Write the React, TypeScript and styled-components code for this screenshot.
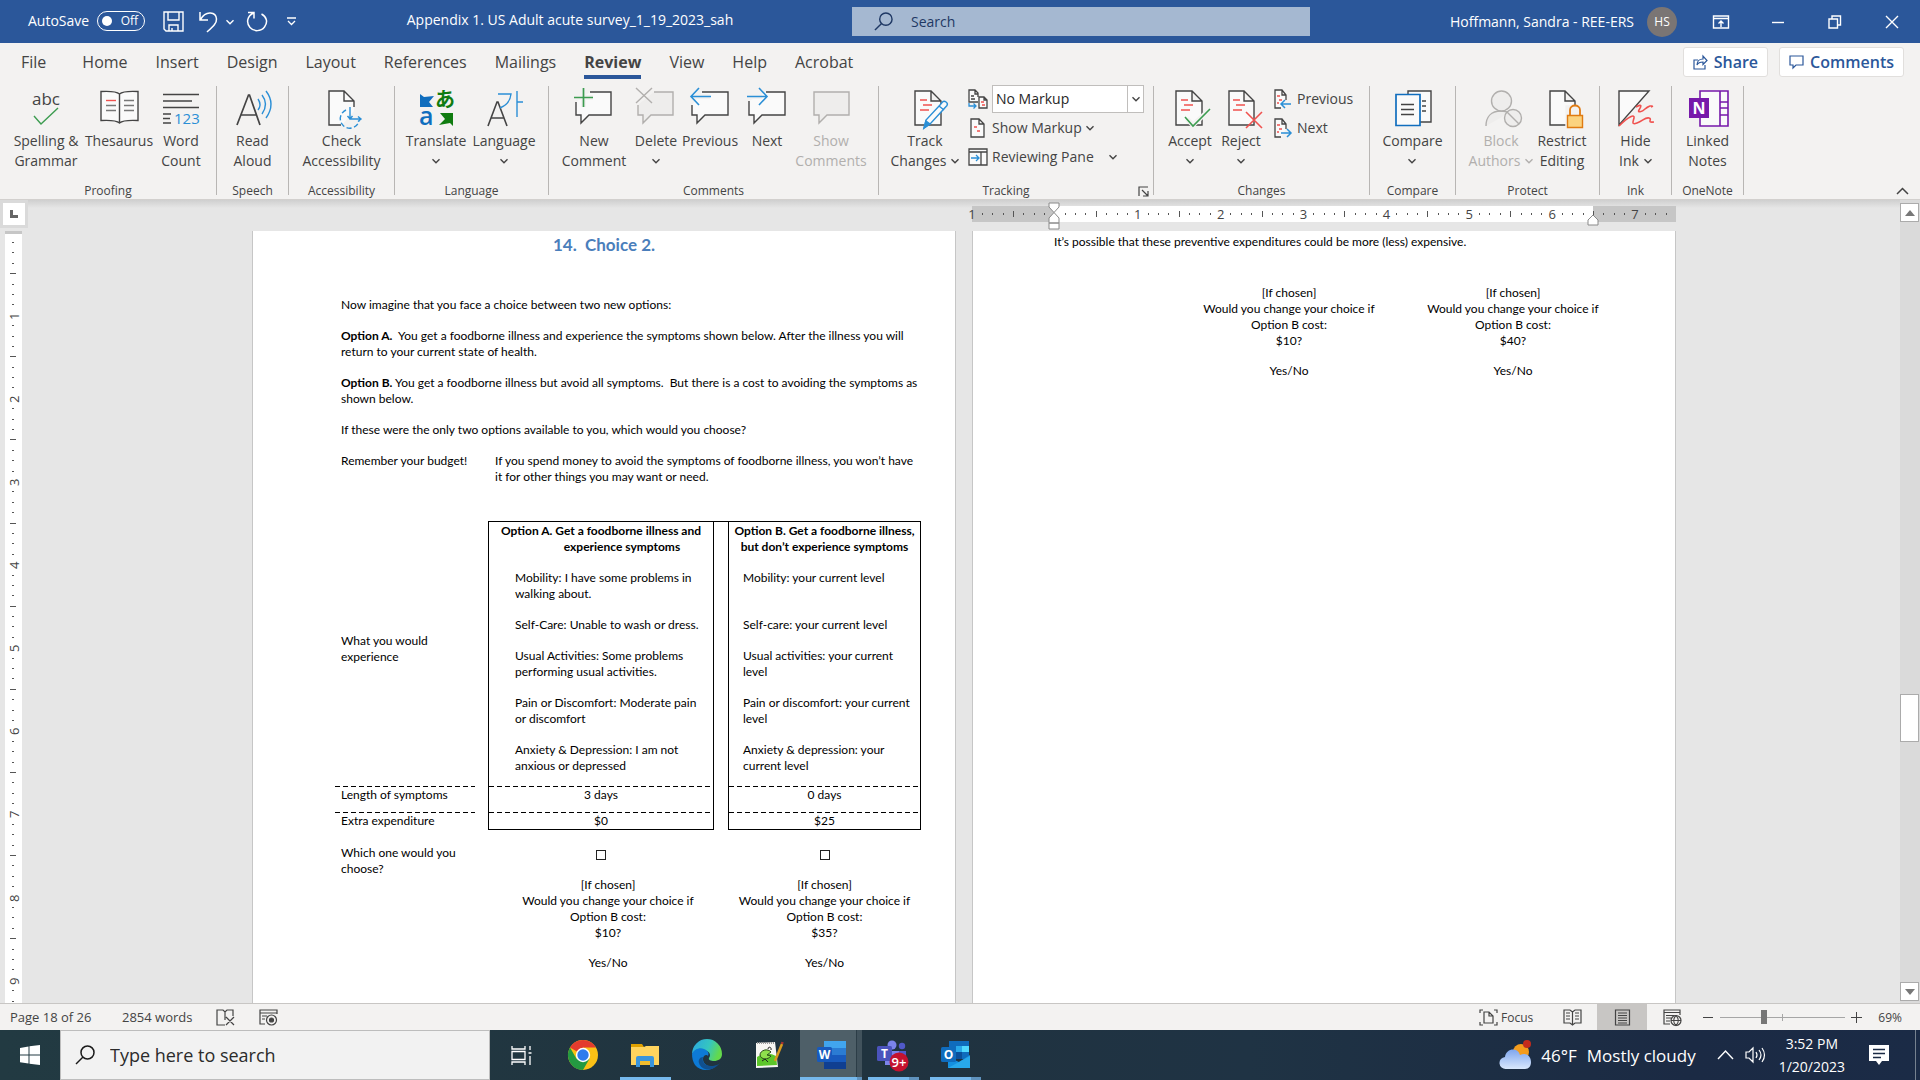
import React from "react";
import styled, { createGlobalStyle, css } from "styled-components";

const ui = `"Open Sans", "Noto Sans", sans-serif`;
const doc = `Lato, "Open Sans", sans-serif`;
const ink = "#444444";
const blue = "#2b8fd6";
const brand = "#2b579a";
const red = "#f0524f";
const green = "#3c9c50";

const GlobalStyle = createGlobalStyle`
  *, *::before, *::after { box-sizing: border-box; }
  html, body { margin: 0; height: 100%; }
  body { font-family: ${ui}; color: ${ink}; overflow: hidden; }
  button { font: inherit; color: inherit; background: none; border: 0; padding: 0; }
  svg { display: block; flex: none; overflow: visible; }
`;

const Shell = styled.div`
  display: flex;
  flex-direction: column;
  height: 100vh;
`;

/* ---------- title bar ---------- */

const TitleBar = styled.header`
  display: grid;
  grid-template-columns: minmax(0, 852fr) minmax(0, 458fr) minmax(0, 610fr);
  align-items: center;
  height: 43px;
  flex: none;
  background: ${brand};
  color: #fff;
  font-size: 14px;
`;

const TitleLeft = styled.div`
  display: flex;
  align-items: center;
  padding-left: 28px;
`;

const QuickAccess = styled.div`
  display: flex;
  align-items: center;
  width: 260px;
`;

const AutoSave = styled.label`
  display: flex;
  align-items: center;
  gap: 8px;
  margin-right: 18px;
  padding-bottom: 2px;
`;

const Toggle = styled.span`
  display: flex;
  align-items: center;
  justify-content: space-between;
  width: 48px;
  height: 20px;
  padding: 0 6px 0 4px;
  border: 1px solid #fff;
  border-radius: 10px;
  font-size: 12px;
`;

const ToggleInput = styled.input`
  appearance: none;
  width: 10px;
  height: 10px;
  margin: 0;
  border-radius: 50%;
  background: #fff;
`;

const QuickButton = styled.button<{ $gap: number }>`
  margin-right: ${(p) => p.$gap}px;
`;

const DocTitle = styled.h1`
  flex: 1;
  margin: 0;
  padding-bottom: 4px;
  font-size: 14px;
  font-weight: 400;
  text-align: center;
  white-space: nowrap;
`;

const SearchBox = styled.label`
  display: flex;
  align-items: center;
  gap: 18px;
  height: 29px;
  padding-left: 22px;
  background: #a5b8d1;
`;

const SearchInput = styled.input`
  flex: 1;
  min-width: 0;
  border: 0;
  padding: 0;
  background: none;
  font: 14px ${ui};
  color: #1f3864;
  &::placeholder { color: #1f3864; opacity: 1; }
`;

const TitleRight = styled.div`
  display: flex;
  align-items: center;
  justify-content: flex-end;
  white-space: nowrap;
`;

const Avatar = styled.span`
  display: grid;
  place-items: center;
  width: 30px;
  height: 30px;
  margin: 0 15px 0 13px;
  border-radius: 50%;
  background: #7a7574;
  font-size: 12px;
`;

const WindowButton = styled.button`
  display: grid;
  place-items: center;
  width: 57px;
  height: 42px;
`;

/* ---------- ribbon ---------- */

const Ribbon = styled.div`
  flex: none;
  background: #f3f2f1;
  border-bottom: 1px solid #d2d0ce;
`;

const TabRow = styled.nav`
  display: flex;
  align-items: flex-start;
  height: 41px;
  padding: 4px 16px 0 21px;
`;

const Tab = styled.button<{ $active?: boolean; $first?: boolean }>`
  height: 32px;
  margin-right: ${(p) => (p.$first ? 36 : 28)}px;
  padding-top: 2px;
  border-bottom: 4px solid ${(p) => (p.$active ? brand : "transparent")};
  font-size: 16px;
  font-weight: ${(p) => (p.$active ? 700 : 400)};
`;

const TabActions = styled.div`
  display: flex;
  gap: 11px;
  margin-left: auto;
`;

const ActionButton = styled.button`
  display: flex;
  align-items: center;
  gap: 6px;
  height: 30px;
  padding: 0 9px;
  border: 1px solid #e1dfdd;
  border-radius: 3px;
  background: #fff;
  color: ${brand};
  font-size: 16px;
  font-weight: 600;
`;

const Groups = styled.div`
  display: flex;
  height: 115px;
`;

const Group = styled.section<{ $width: number }>`
  display: flex;
  flex-direction: column;
  flex: none;
  width: ${(p) => p.$width}px;
`;

const GroupBody = styled.div<{ $pad?: number }>`
  display: flex;
  flex: 1;
  padding-left: ${(p) => p.$pad ?? 0}px;
`;

const GroupLabel = styled.div`
  display: grid;
  grid-template-columns: 1fr auto;
  align-items: center;
  height: 16px;
  font-size: 12px;
  line-height: 16px;
  text-align: center;
`;

const LauncherButton = styled.button`
  padding-right: 4px;
  padding-left: 5px;
`;

const Separator = styled.div`
  flex: none;
  width: 1px;
  margin: 2px 0 4px;
  background: #b8b6b4;
`;

const BigButton = styled.button<{ $width: number; $disabled?: boolean }>`
  display: flex;
  flex-direction: column;
  align-items: center;
  width: ${(p) => p.$width}px;
  padding-top: 4px;
  font-size: 14px;
  line-height: 20px;
  white-space: nowrap;
  ${(p) => p.$disabled && css`color: #b1afad;`}
`;

const BigLabel = styled.span`
  display: flex;
  flex-direction: column;
  align-items: center;
  padding-top: 3px;
`;

const LabelLine = styled.span`
  display: flex;
  align-items: center;
  gap: 5px;
  height: 20px;
`;

const SmallColumn = styled.div<{ $pad: number }>`
  display: flex;
  flex-direction: column;
  padding-left: ${(p) => p.$pad}px;
`;

const SmallButton = styled.button`
  display: flex;
  align-items: center;
  gap: 4px;
  height: 29px;
  font-size: 14px;
  white-space: nowrap;
`;

const ComboRow = styled.label`
  display: flex;
  align-items: center;
  gap: 4px;
  height: 29px;
`;

const Combo = styled.span`
  display: grid;
  grid-template-columns: 1fr 16px;
  width: 152px;
  height: 28px;
  border: 1px solid #c0bebc;
  background: #fff;
`;

const ComboSelect = styled.select`
  appearance: none;
  grid-area: 1 / 1 / 2 / 3;
  padding: 0 20px 0 3px;
  border: 0;
  background: none;
  font: 14px ${ui};
  color: #262626;
`;

const ComboArrow = styled.span`
  grid-area: 1 / 2 / 2 / 3;
  display: grid;
  place-items: center;
  border-left: 1px solid #c0bebc;
  pointer-events: none;
`;

const CollapseButton = styled.button`
  align-self: flex-end;
  margin: 0 11px 4px auto;
`;

/* ---------- workspace ---------- */

const Workspace = styled.main`
  display: flex;
  flex: 1;
  min-height: 0;
  overflow: hidden;
  background: linear-gradient(#cfcfcf, #e6e6e6 8px);
`;

const LeftRail = styled.div`
  display: flex;
  flex-direction: column;
  flex: none;
  width: 28px;
`;

const TabStop = styled.button`
  display: grid;
  place-items: center;
  height: 28px;
  flex: none;
  margin-bottom: 3px;
  border: 3px solid #dadada;
  background: #fff;
`;

const VerticalRuler = styled.div`
  display: flex;
  flex-direction: column;
  flex: 1;
  margin: 0 6px 0 5px;
  border-top: 3px solid #c6c6c6;
  background: #fff;
`;

const VerticalTicks = styled.div`
  display: flex;
  flex: 1;
  flex-direction: column;
  justify-content: space-between;
  align-items: center;
  padding: 9px 0 1px;
`;

const Mark = styled.span<{ $kind: "dot" | "half" | "inch"; $vertical?: boolean }>`
  display: flex;
  flex: none;
  align-items: center;
  justify-content: center;
  font-size: 13px;
  line-height: 14px;
  ${(p) =>
    p.$vertical
      ? css`
          width: 17px;
          height: 0;
          writing-mode: vertical-rl;
          transform: rotate(180deg);
        `
      : css`
          width: 0;
          height: 16px;
        `}
  &::before {
    content: "";
    flex: none;
    display: ${(p) => (p.$kind === "inch" ? "none" : "block")};
    width: ${(p) => (p.$vertical ? (p.$kind === "half" ? 6 : 2) : 1)}px;
    height: ${(p) => (p.$vertical ? 1 : p.$kind === "half" ? 6 : 2)}px;
    background: #555;
  }
`;

const Canvas = styled.div`
  display: grid;
  grid-template-columns: 704px 704px;
  grid-template-rows: 31px minmax(0, 1fr);
  column-gap: 16px;
  justify-content: center;
  flex: 1;
  min-width: 0;
`;

const HorizontalRuler = styled.div`
  grid-column: 2;
  align-self: start;
  display: grid;
  grid-template-columns: 82px 539px 1fr;
  grid-template-rows: 16px;
  height: 16px;
  margin-top: 6px;
`;

const RulerZone = styled.div<{ $column: number; $outside?: boolean }>`
  grid-area: 1 / ${(p) => p.$column} / 2 / ${(p) => p.$column + 1};
  background: ${(p) => (p.$outside ? "#c6c6c6" : "#fff")};
`;

const RulerTicks = styled.div`
  grid-area: 1 / 1 / 2 / 4;
  display: flex;
  justify-content: space-between;
  padding-right: 9px;
`;

const IndentMarker = styled.span<{ $column: number }>`
  grid-area: 1 / ${(p) => p.$column} / 2 / ${(p) => p.$column + 1};
  justify-self: start;
  width: 0;
`;

const Page = styled.article`
  border: solid #c6c6c6;
  border-width: 0 1px;
  background: #fff;
  overflow: hidden;
  font: 12px/16px ${doc};
  color: #000;
  white-space: nowrap;
`;

const Heading = styled.h2`
  margin: 0 0 42px;
  padding: 4px 0 0;
  font: 700 17px/20px ${doc};
  color: #4a7ebb;
  text-align: center;
  white-space: pre;
`;

const Body = styled.div`
  display: flex;
  flex-direction: column;
  gap: 15px;
  padding-left: 88px;
`;

const Para = styled.p`
  margin: 0;
  white-space: pre-line;
`;

const Budget = styled.div`
  display: grid;
  grid-template-columns: 154px 1fr;
`;

const ChoiceTable = styled.table`
  width: 586px;
  margin: 36px 0 0 82px;
  border-collapse: separate;
  border-spacing: 0;
  table-layout: fixed;
`;

const Column = styled.col<{ $width: number }>`
  width: ${(p) => p.$width}px;
`;

const dashTop = css`
  background: repeating-linear-gradient(90deg, #000 0 5px, transparent 5px 8px) top / 100% 1px no-repeat;
`;

const Cell = styled.td<{ $box?: boolean; $top?: boolean; $dash?: boolean; $bottom?: boolean }>`
  padding: ${(p) => (p.$box ? 1 : 0)}px 0 0;
  vertical-align: top;
  text-align: center;
  ${(p) => p.$box && css`border-left: 1px solid #000; border-right: 1px solid #000;`}
  ${(p) => p.$top && css`border-top: 1px solid #000;`}
  ${(p) => p.$bottom && css`border-bottom: 1px solid #000;`}
  ${(p) => p.$dash && dashTop}
`;

const RowHead = styled.th<{ $dash?: boolean; $middle?: boolean; $pad?: number }>`
  padding: ${(p) => p.$pad ?? 1}px 0 ${(p) => (p.$middle ? 10 : 0)}px 6px;
  vertical-align: ${(p) => (p.$middle ? "middle" : "top")};
  text-align: left;
  font-weight: 400;
  ${(p) => p.$dash && dashTop}
`;

const Row = styled.tr<{ $height?: number }>`
  height: ${(p) => (p.$height ? `${p.$height}px` : "auto")};
`;

const OptionTitle = styled.div`
  margin-bottom: 15px;
  font-weight: 700;
`;

const HangingLine = styled.div<{ $indent?: number }>`
  padding-left: ${(p) => p.$indent ?? 0}px;
`;

const Symptoms = styled.div<{ $indent: number }>`
  display: flex;
  flex-direction: column;
  gap: 15px;
  padding-left: ${(p) => p.$indent}px;
  text-align: left;
`;

const Symptom = styled.p<{ $tall?: boolean }>`
  margin: 0;
  min-height: ${(p) => (p.$tall ? 32 : 16)}px;
  white-space: pre-line;
`;

const PickBox = styled.input`
  appearance: none;
  display: block;
  width: 10px;
  height: 10px;
  margin: 20px auto 0;
  border: 1px solid #222;
`;

const FollowUp = styled.div`
  text-align: center;
`;

const Answer = styled.div`
  margin-top: 14px;
`;

const Possible = styled.p`
  margin: 3px 0 35px;
  padding-left: 81px;
`;

const FollowPair = styled.div`
  display: grid;
  grid-template-columns: 224px 224px;
  padding-left: 204px;
`;

const Scrollbar = styled.div`
  display: flex;
  flex-direction: column;
  flex: none;
  width: 20px;
  padding: 3px 1px 2px 0;
  background: #dadada;
`;

const ScrollButton = styled.button`
  display: grid;
  place-items: center;
  height: 19px;
  border: 1px solid #ababab;
  background: #fff;
`;

const ScrollGap = styled.div<{ $share: number }>`
  flex: ${(p) => p.$share};
`;

const ScrollThumb = styled.div`
  height: 48px;
  border: 1px solid #ababab;
  background: #fff;
`;

/* ---------- status bar ---------- */

const StatusBar = styled.footer`
  display: flex;
  align-items: stretch;
  flex: none;
  height: 27px;
  border-top: 1px solid #c8c6c4;
  background: #f3f2f1;
  font-size: 12px;
`;

const StatusLeft = styled.div`
  display: flex;
  align-items: center;
  gap: 24px;
  padding-left: 10px;
  font-size: 13px;
`;

const PageCount = styled.span`
  min-width: 88px;
`;

const StatusRight = styled.div`
  display: flex;
  align-items: center;
  margin-left: auto;
  padding-right: 18px;
`;

const FocusButton = styled.button`
  display: flex;
  align-items: center;
  gap: 3px;
  margin-right: 14px;
`;

const ViewButton = styled.button<{ $active?: boolean }>`
  display: grid;
  place-items: center;
  align-self: stretch;
  width: 50px;
  background: ${(p) => (p.$active ? "#c8c6c4" : "none")};
`;

const ZoomSlider = styled.input`
  appearance: none;
  width: 125px;
  height: 14px;
  margin: 0 6px;
  background:
    linear-gradient(#a6a6a6, #a6a6a6) center / 100% 1px no-repeat,
    linear-gradient(#a6a6a6, #a6a6a6) center / 1px 7px no-repeat;
  &::-webkit-slider-thumb {
    appearance: none;
    width: 6px;
    height: 14px;
    background: #767676;
  }
`;

const ZoomValue = styled.span`
  margin-left: 16px;
`;

/* ---------- taskbar ---------- */

const Taskbar = styled.div`
  display: flex;
  align-items: stretch;
  flex: none;
  height: 50px;
  background: linear-gradient(90deg, #223a42, #20333f 45%, #1f3344 65%, #1b2a44 88%, #1b2b46);
  color: #fff;
`;

const StartButton = styled.button`
  display: grid;
  place-items: center;
  width: 60px;
`;

const TaskSearch = styled.label`
  display: flex;
  align-items: center;
  gap: 15px;
  width: 430px;
  padding-left: 14px;
  border: 1px solid #bdbdbd;
  background: #f2f2f2;
`;

const TaskSearchInput = styled.input`
  flex: 1;
  min-width: 0;
  border: 0;
  padding: 0;
  background: none;
  font: 18px ${ui};
  &::placeholder { color: #2b2b2b; opacity: 1; }
`;

const TaskButton = styled.button<{ $state?: "open" | "stack" | "active" }>`
  display: grid;
  place-items: center;
  width: 62px;
  ${(p) =>
    p.$state === "open" &&
    css`background: linear-gradient(#76b9ed, #76b9ed) bottom / 51px 3px no-repeat;`}
  ${(p) =>
    p.$state === "stack" &&
    css`background: linear-gradient(90deg, #76b9ed 41px, #5f92bd 41px) bottom / 51px 3px no-repeat;`}
  ${(p) =>
    p.$state === "active" &&
    css`
      background:
        linear-gradient(90deg, #76b9ed 57px, #5f92bd 57px) bottom / 100% 3px no-repeat,
        linear-gradient(90deg, #4e5f68 56px, #2c3d47 56px 57px, #41525c 57px);
    `}
`;

const Tray = styled.div`
  display: flex;
  align-items: center;
  margin-left: auto;
`;

const Weather = styled.button`
  display: flex;
  align-items: center;
  gap: 10px;
  margin-right: 21px;
  font-size: 17px;
`;

const TrayButton = styled.button<{ $gap: number }>`
  margin-right: ${(p) => p.$gap}px;
`;

const Clock = styled.time`
  margin-right: 24px;
  font-size: 14px;
  line-height: 23px;
  text-align: center;
`;

const ShowDesktop = styled.button`
  align-self: stretch;
  width: 5px;
  border-left: 1px solid #76818f;
`;

/* ---------- icons ---------- */

const Caret = ({ size = 8 }: { size?: number }) => (
  <svg width={size} height={size} viewBox="0 0 8 8" fill="none" stroke="currentColor" strokeWidth="1.4">
    <path d="M.5 2.2 4 5.7 7.5 2.2" />
  </svg>
);

const Big = ({ children, color = ink }: { children: React.ReactNode; color?: string }) => (
  <svg width="40" height="40" viewBox="0 0 40 40" fill="none" stroke={color} strokeWidth="1.4">
    {children}
  </svg>
);

const Lens = ({ size, color }: { size: number; color: string }) => (
  <svg width={size} height={size} viewBox="0 0 20 20" fill="none" stroke={color} strokeWidth="1.5">
    <circle cx="12.5" cy="7.5" r="6.5" />
    <path d="M8 12 1 19" />
  </svg>
);

const Sheet = ({ x = 8, w = 25 }: { x?: number; w?: number }) => (
  <path fill="#fafafa" d={`M${x} 3h${w - 10}l10 10v24h-${w}zM${x + w - 10} 3v10h10`} />
);

const RedLines = ({ x }: { x: number }) => (
  <path stroke={red} d={`M${x} 12h7M${x + 3} 17h9M${x} 22h9`} />
);

const Bubble = () => <path fill="#fafafa" d="M16 4H37V27H15L7 35V27H2V14" />;

const icons = {
  spelling: (
    <Big>
      <text x="20" y="17" textAnchor="middle" fontSize="17" fontFamily={ui} fill={ink} stroke="none">abc</text>
      <path stroke={green} d="m8 28 7 8 17-16" />
    </Big>
  ),
  thesaurus: (
    <Big>
      <path fill="#fafafa" d="M20.500 6C17 3 11 3 2 3.500V32.500C11 32 17 32 20.500 35 24 32 30 32 39 32.500V3.500C30 3 24 3 20.500 6V35" />
      <path stroke="#777" d="M7 17.500h10M7 22.500h10M25 12.500h10M25 17.500h10M25 22.500h10" />
      <path stroke={red} d="M7 12.500h10" />
    </Big>
  ),
  wordCount: (
    <Big>
      <path d="M2 6.500h36M2 13h29M2 19.500h36M2 26h8M2 30.500h7M2 35h8" />
      <text x="13" y="36" fontSize="15" fontFamily={ui} fill={blue} stroke="none">123</text>
    </Big>
  ),
  readAloud: (
    <Big>
      <path d="M4 37 15.500 7h1L27 37M8 27H23.500" strokeWidth="1.700" />
      <path stroke={blue} d="M25 11q4 6 0 11M29 7q7 9 0 19M33 3q10 13 0 27" />
    </Big>
  ),
  accessibility: (
    <Big>
      <path fill="#fafafa" stroke="none" d="M7 3h15l10 10v10l-12 14H7z" />
      <path d="M19 37H7V3H22L32 13V19M22 3V13H32" />
      <path stroke={blue} strokeDasharray="5 2.500" d="M24 22a9.500 9.500 0 1 0 13 11" />
      <path stroke={blue} d="M28 19v12h11M25.500 28l2.500 3 2.500-3M36 28.500l3 2.500-3 2.500" />
    </Big>
  ),
  translate: (
    <Big>
      <path fill="#106ebe" stroke="none" d="M4 6l4 3 10-1-5 6 4 5H4z" />
      <text x="3" y="37" fontSize="25" fontWeight="600" fontFamily={ui} fill="#106ebe" stroke="none">a</text>
      <text x="19" y="19" fontSize="20" fontWeight="700" fontFamily='"Noto Sans CJK JP", sans-serif' fill="#107c10" stroke="none">あ</text>
      <path fill="#107c10" stroke="none" d="M24 25H37V38l-3-3-11 2 6-6z" />
    </Big>
  ),
  language: (
    <Big>
      <path d="M4 38 13 14h1l9 24M7 30H20" strokeWidth="1.600" />
      <path stroke={blue} d="M14 6H27Q26 16 16 20M33 3V29M33 14h6" />
    </Big>
  ),
  newComment: (
    <Big>
      <Bubble />
      <path stroke="#f3f2f1" strokeWidth="5" d="M9.500 3v16M2 9.500h17" />
      <path stroke={green} strokeWidth="1.700" d="M9.500 0v19M0 9.500h19" />
    </Big>
  ),
  deleteComment: (
    <Big color="#b1afad">
      <path fill="#eeedec" d="M18 4H37V27H15L7 35V27H2V17" />
      <path d="m0 0 16 15M16 0 0 15" />
    </Big>
  ),
  previousComment: (
    <Big>
      <path fill="#fafafa" d="M12 4H38V27H15L7 35V27H2V17" />
      <path stroke="#f3f2f1" strokeWidth="5" d="M4 8.500h16" />
      <path stroke={blue} strokeWidth="1.600" d="M9 0 1 8.500 9 17M1 8.500H21" />
    </Big>
  ),
  nextComment: (
    <Big>
      <path fill="#fafafa" d="M19 4H38V27H15L7 35V27H2V13" />
      <path stroke="#f3f2f1" strokeWidth="5" d="M1 8.500h14" />
      <path stroke={blue} strokeWidth="1.600" d="m12 0 8 8.500-8 8.500M0 8.500h20" />
    </Big>
  ),
  showComments: (
    <Big color="#b1afad">
      <path fill="#eeedec" d="M3 4H38V27H16L8 35V27H3z" />
    </Big>
  ),
  track: (
    <Big>
      <Sheet x={10} w={26} />
      <RedLines x={15} />
      <path stroke={blue} fill="#fafafa" d="M35 17 37.500 14c2-2 6 1 4.500 3.500L26 35l-7 5 2-8z" />
      <path stroke={blue} fill={blue} d="m21 33 4 3-6 4z" />
      <path stroke={blue} d="m34 18 5 4" />
    </Big>
  ),
  accept: (
    <Big>
      <Sheet x={6} w={26} />
      <RedLines x={11} />
      <path stroke="#f3f2f1" strokeWidth="5" d="m17 31 6 6 14-13" />
      <path stroke={green} strokeWidth="1.600" d="m15 29 8 9 17-17" />
    </Big>
  ),
  reject: (
    <Big>
      <Sheet x={8} w={25} />
      <RedLines x={12} />
      <path stroke={red} strokeWidth="1.600" d="m25 24 16 16M41 24 25 40" />
    </Big>
  ),
  compare: (
    <Big>
      <path fill="#fafafa" d="M15 3H38V34H15z" />
      <path d="M29 13h4M29 18h4M29 23h4" />
      <path fill="#fafafa" stroke="#106ebe" strokeWidth="1.700" d="M3 6.500H27V37.500H3z" />
      <path d="M8 16.500h13M8 21.500h13M8 26.500h13" />
    </Big>
  ),
  block: (
    <Big color="#b1afad">
      <path fill="#eeedec" d="M5 38C5 29 10 23 20 23q5 0 8 2" />
      <circle cx="20.500" cy="13" r="10" fill="#eeedec" />
      <circle cx="32" cy="30" r="8.500" fill="#eeedec" />
      <path d="m26 24 12 12" />
    </Big>
  ),
  restrict: (
    <Big>
      <Sheet x={8} w={25} />
      <path stroke="#f3f2f1" fill="#f3f2f1" d="M24 18h18v22H24z" />
      <path stroke="#e07b12" fill="none" strokeWidth="1.800" d="M28 28v-6c0-6 10-6 10 0v6" />
      <path stroke="#e07b12" fill="#fbd37f" d="M25.500 27.500h15V39.500h-15z" />
    </Big>
  ),
  ink: (
    <Big>
      <path fill="#fafafa" d="M3 3H33L3 37z" />
      <path stroke={red} strokeWidth="1.600" d="M20 19c7-4 5 0 3 3s3 2 6-1 8-4 6-2l2-1M3 38c10-10 16-12 15-8-1 4-3 7 3 5s8-6 12-5-3 5 5 4" />
    </Big>
  ),
  oneNote: (
    <Big color="#7719aa">
      <path fill="#fafafa" strokeWidth="1.600" d="M12 3H40V38H12zM32 3v35M32 14h8M32 20h8M32 27h8" />
      <path fill="#7719aa" stroke="none" d="M1 10H21V30H1z" />
      <text x="11" y="26" textAnchor="middle" fontSize="16" fontWeight="700" fontFamily={ui} fill="#fff" stroke="none">N</text>
    </Big>
  ),
};

const SmallIcon = ({ kind }: { kind: "display" | "show" | "pane" | "prev" | "next" }) => (
  <svg width="20" height="20" viewBox="0 0 20 20" fill="none" stroke={ink} strokeWidth="1.300">
    {kind === "display" && (
      <>
        <path fill="#fafafa" d="M10 13H1V1h6l3 3v4M7 1v4h3M3 7h3M3 10h4" />
        <path fill="#fafafa" d="M11 8h5l3 3v8h-8zM16 8v3h3" />
        <path stroke={red} d="M13 13h3M14 16h3" />
        <path stroke={blue} d="M1 14v3h7M5.500 14.500 8 17l-2.500 2.500" />
      </>
    )}
    {kind === "show" && (
      <>
        <path fill="#fafafa" d="M3 1h8l5 5v13H3zM11 1v5h5" />
        <path stroke={red} d="M6 9h3M9 13h3" />
      </>
    )}
    {kind === "pane" && (
      <>
        <path fill="#fafafa" d="M1 2h18v16H1zM1 5h18M13 5v13" />
        <path stroke={blue} d="M3 11h8M8 8l3 3-3 3" />
      </>
    )}
    {(kind === "prev" || kind === "next") && (
      <>
        <path fill="#fafafa" d="M13 11V6L9 1H2v18h6M9 1v5h4" />
        <path stroke={red} d="M4 7h3M6 11h3M4 14h2" />
        <path
          stroke={blue}
          strokeWidth="1.500"
          d={kind === "prev" ? "M18 15H8M12 11l-4 4 4 4" : "M8 15h10M14 11l4 4-4 4"}
        />
      </>
    )}
  </svg>
);

const Floppy = () => (
  <svg width="21" height="21" viewBox="0 0 21 21" fill="none" stroke="#fff" strokeWidth="1.400">
    <path d="M1 1h19v19H3l-2-2zM5 1v8h11V1M6 20v-6h9v6M9 17v3" />
  </svg>
);

const Undo = () => (
  <svg width="19" height="21" viewBox="0 0 19 21" fill="none" stroke="#fff" strokeWidth="1.500">
    <path d="M1 1v8h8M1.500 8.500C7-1 17 1 17.500 8c.3 4-3 7-9.500 13" />
  </svg>
);

const Redo = () => (
  <svg width="22" height="21" viewBox="0 0 22 21" fill="none" stroke="#fff" strokeWidth="1.500">
    <path d="M2 1.500h6v6M7.500 2C1 5 0 12 4 16.500s11 4 14.500-.500S21 6 15.500 3" />
  </svg>
);

const Customize = () => (
  <svg width="9" height="9" viewBox="0 0 9 9" fill="none" stroke="#fff" strokeWidth="1.300">
    <path d="M0 1h9M1 4l3.500 3.500L8 4" />
  </svg>
);

const WindowIcon = ({ kind }: { kind: "ribbon" | "min" | "restore" | "close" }) => (
  <svg width="16" height="14" viewBox="0 0 16 14" fill="none" stroke="#fff" strokeWidth="1.400">
    {kind === "ribbon" && <path d="M.5 1h15v12H.5zM.5 3.500h15M8 12V6M5.500 8.500 8 6l2.500 2.500" />}
    {kind === "min" && <path d="M2 7.500h12" />}
    {kind === "restore" && <path d="M2 4h8.500v9H2zM5 4V1h8.500v9h-3" />}
    {kind === "close" && <path d="m2 1 12 12M14 1 2 13" />}
  </svg>
);

const ShareIcon = () => (
  <svg width="15" height="15" viewBox="0 0 15 15" fill="none" stroke={brand} strokeWidth="1.200">
    <path d="M5 5H1v9h11v-4M4 10c0-4 3-6 6-6V1l4 4.500-4 4V7c-3 0-5 1-6 3z" />
  </svg>
);

const CommentIcon = () => (
  <svg width="15" height="14" viewBox="0 0 15 14" fill="none" stroke={brand} strokeWidth="1.200">
    <path d="M1 1h13v9H7l-3 3v-3H1z" />
  </svg>
);

const Launcher = () => (
  <svg width="11" height="11" viewBox="0 0 11 11" fill="none" stroke={ink} strokeWidth="1.200">
    <path d="M1 10V1h9M4 4l6 6M10 5v5H5" />
  </svg>
);

const StatusIcon = ({ kind }: { kind: "proof" | "macro" | "focus" | "read" | "print" | "web" }) => (
  <svg width="19" height="17" viewBox="0 0 19 17" fill="none" stroke={ink} strokeWidth="1.200">
    {kind === "proof" && <path d="M9 16H1V1h6l2 2 2-2h6v6M9 3v8M10 8l8 8M18 8l-8 8" />}
    {kind === "macro" && (
      <>
        <path d="M6 15H1V1h17v4M1 4h17M3 7h5M3 10h3" />
        <circle cx="12.500" cy="11" r="5" />
        <circle cx="12.500" cy="11" r="2" fill={ink} />
      </>
    )}
    {kind === "focus" && <path d="M4 1H1v3M15 1h3v3M4 16H1v-3M15 16h3v-3M5 3h5l4 4v7H5zM10 3v4h4" />}
    {kind === "read" && <path d="M9.500 3V16M9.500 3 7 1H1v13h6l2.500 2 2.500-2h6V1h-6zM3 4h4M3 7h4M3 10h4M12 4h4M12 7h4M12 10h4" />}
    {kind === "print" && <path d="M2.500 1h14v15h-14zM5 4h9M5 6.500h9M5 9h9M5 11.500h9M5 14h9" />}
    {kind === "web" && (
      <>
        <path d="M7 15H1V1h16v5M1 3.500h16M3 6.500h9M3 9h5M3 12h4" />
        <circle cx="13" cy="11.500" r="5" fill="#f3f2f1" />
        <path d="M8 11.500h10M13 6.500c-3 3-3 7 0 10 3-3 3-7 0-10" />
      </>
    )}
  </svg>
);

const Chrome = () => (
  <svg width="30" height="30" viewBox="0 0 30 30">
    <circle cx="15" cy="15" r="15" fill="#fbc116" />
    <path fill="#e33b2e" d="M15 15 2 7.500A15 15 0 0 1 28 7.500H15z" />
    <path fill="#249a41" d="M2 7.500A15 15 0 0 0 15 30l6.500-11.300L15 15 8.500 18.700z" />
    <circle cx="15" cy="15" r="7.200" fill="#fff" />
    <circle cx="15" cy="15" r="5.700" fill="#2f7bed" />
  </svg>
);

const Explorer = () => (
  <svg width="28" height="24" viewBox="0 0 28 24">
    <path fill="#e0a100" d="M0 1h11l2 3H0z" />
    <path fill="#ffd45e" d="M0 4h13l2-1h13v19H0z" />
    <path fill="#3a95dc" d="M5 24V15q0-2 2-2h14q2 0 2 2v9h-4v-6H9v6z" />
    <path fill="#f2bd2d" d="M9 18h10v4H9z" />
  </svg>
);

const Edge = () => (
  <svg width="30" height="30" viewBox="0 0 30 30">
    <defs>
      <linearGradient id="edgeTop" x1="0" x2="1" y2="0.3">
        <stop offset="0" stopColor="#2aa5e0" />
        <stop offset="0.600" stopColor="#35c6c0" />
        <stop offset="1" stopColor="#63d94c" />
      </linearGradient>
    </defs>
    <path fill="url(#edgeTop)" d="M0 14A15 15 0 0 1 30 14c0 5-4 7-8 7-3 0-6-1-5-3 3-4-1-8-6-8C5 10 1 13 0 14z" />
    <path fill="#0d7ad6" d="M0 14c2-5 8-7 12-5 5 2 5 5 4 7-1-2-5-1-5 3 0 6 7 9 13 7-6 6-16 5-21-1-2-3-3-7-3-11z" />
    <path fill="#10508f" d="M11 17c-2 7 6 12 16 7 2-1 0 0-2 2-7 6-16 4-18-3-1-3 1-6 4-6z" />
  </svg>
);

const NotepadPlus = () => (
  <svg width="28" height="28" viewBox="0 0 28 28">
    <path fill="#f7f7f3" d="M1 2l19-1 3 25-22 1z" />
    <path fill="#5cc62a" d="M2 16q10-6 19-1l1 9-20 1z" />
    <path fill="none" stroke="#999" strokeDasharray="1 1" strokeWidth="2" d="M2 2h17" />
    <path fill="#8ee04c" stroke="#2c4b1a" d="M5 14c0-5 8-7 11-3l-4 3 4 1c-3 4-10 4-11-1z" />
    <path fill="none" stroke="#222" d="M7 20l3-2 3 3M13 8c0-3 4-2 3 1" />
    <path stroke="#d99a1e" strokeWidth="2.500" d="M27 3 20 20" />
    <path stroke="#a33" strokeWidth="2.500" d="M27.500 1 27 3" />
  </svg>
);

const Tile = ({ color, letter, y }: { color: string; letter: string; y: number }) => (
  <>
    <rect x="0" y={y} width="15" height="15" rx="1.500" fill={color} />
    <text x="7.500" y={y + 12} textAnchor="middle" fontSize="12" fontWeight="700" fontFamily={ui} fill="#fff">
      {letter}
    </text>
  </>
);

const WordLogo = () => (
  <svg width="29" height="28" viewBox="0 0 29 28">
    <path fill="#41a5ee" d="M7 0h22v7H7z" />
    <path fill="#2b7cd3" d="M7 7h22v7H7z" />
    <path fill="#185abd" d="M7 14h22v7H7z" />
    <path fill="#103f91" d="M7 21h22v7H7z" />
    <Tile color="#185abd" letter="W" y={6} />
  </svg>
);

const TeamsLogo = () => (
  <svg width="32" height="30" viewBox="0 0 32 30">
    <circle cx="15" cy="5" r="4.500" fill="#7b83eb" />
    <circle cx="25" cy="6" r="3.200" fill="#5059c9" />
    <path fill="#5059c9" d="M18 11h11v9H18z" />
    <path fill="#7b83eb" d="M8 11h14v14H8z" />
    <Tile color="#4b53bc" letter="T" y={6} />
    <circle cx="22" cy="22" r="9.500" fill="#c4122f" />
    <text x="22" y="27" textAnchor="middle" fontSize="13" fontWeight="600" fontFamily={ui} fill="#fff">9+</text>
  </svg>
);

const OutlookLogo = () => (
  <svg width="29" height="28" viewBox="0 0 29 28">
    <path fill="#0f6cbd" d="M8 0h20v18H8z" />
    <path fill="#28a8ea" d="M15 5h6v6h-6z" />
    <path fill="#50d9ff" d="M21 5h7v6h-7z" />
    <path fill="#0a4f9a" d="M15 11h6v7h-6z" />
    <path fill="#1490df" d="M7 16l11 5 11-7v13H7z" />
    <path fill="#28a8ea" d="M7 27l22-12v12z" />
    <Tile color="#0f6cbd" letter="O" y={6} />
  </svg>
);

const WeatherIcon = () => (
  <svg width="31" height="30" viewBox="0 0 31 30">
    <defs>
      <linearGradient id="cloud" y2="1" x2="0">
        <stop offset="0" stopColor="#7fa6ee" />
        <stop offset="1" stopColor="#d9e8fd" />
      </linearGradient>
    </defs>
    <circle cx="21" cy="12" r="8" fill="#f59c1c" />
    <path fill="url(#cloud)" d="M6 29a6 6 0 0 1-1-12C6 8 18 7 20 15c6-3 11 1 11 7 0 4-2 7-6 7z" />
    <circle cx="27" cy="4" r="4" fill="#c42b1c" />
  </svg>
);

/* ---------- composition ---------- */

type BigProps = { icon: keyof typeof icons; lines: string[]; width: number; caret?: "below" | "inline"; disabled?: boolean };

const RibbonButton = ({ icon, lines, width, caret, disabled }: BigProps) => (
  <BigButton type="button" $width={width} $disabled={disabled} disabled={disabled}>
    {icons[icon]}
    <BigLabel>
      {lines.map((line, i) => (
        <LabelLine key={line}>
          {line}
          {caret === "inline" && i === lines.length - 1 && <Caret />}
        </LabelLine>
      ))}
      {caret === "below" && (
        <LabelLine>
          <Caret />
        </LabelLine>
      )}
    </BigLabel>
  </BigButton>
);

type GroupProps = { name: string; width: number; pad?: number; launcher?: boolean; children: React.ReactNode };

const RibbonGroup = ({ name, width, pad, launcher, children }: GroupProps) => (
  <>
    <Group $width={width} aria-label={name}>
      <GroupBody $pad={pad}>{children}</GroupBody>
      <GroupLabel>
        <span>{name}</span>
        {launcher && (
          <LauncherButton type="button" aria-label="Tracking options">
            <Launcher />
          </LauncherButton>
        )}
      </GroupLabel>
    </Group>
    <Separator />
  </>
);

const marks = (from: number, to: number, vertical?: boolean) =>
  Array.from({ length: to - from + 1 }, (_, i) => {
    const n = from + i;
    const kind = n % 8 === 0 ? "inch" : n % 4 === 0 ? "half" : "dot";
    return (
      <Mark key={n} $kind={kind} $vertical={vertical}>
        {kind === "inch" && n !== 0 ? Math.abs(n / 8) : null}
      </Mark>
    );
  });

const FollowUpText = ({ price }: { price: string }) => (
  <FollowUp>
    [If chosen]
    <br />
    Would you change your choice if
    <br />
    Option B cost:
    <br />
    {price}
    <Answer>Yes/No</Answer>
  </FollowUp>
);

const symptomsA = [
  "Mobility: I have some problems in\nwalking about.",
  "Self-Care: Unable to wash or dress.",
  "Usual Activities: Some problems\nperforming usual activities.",
  "Pain or Discomfort: Moderate pain\nor discomfort",
  "Anxiety & Depression: I am not\nanxious or depressed",
];

const symptomsB = [
  "Mobility: your current level",
  "Self-care: your current level",
  "Usual activities: your current\nlevel",
  "Pain or discomfort: your current\nlevel",
  "Anxiety & depression: your\ncurrent level",
];

const tabs = ["File", "Home", "Insert", "Design", "Layout", "References", "Mailings", "Review", "View", "Help", "Acrobat"];

export default function App() {
  return (
    <Shell>
      <GlobalStyle />
      <TitleBar>
        <TitleLeft>
          <QuickAccess>
            <AutoSave>
              AutoSave
              <Toggle>
                <ToggleInput type="checkbox" role="switch" />
                Off
              </Toggle>
            </AutoSave>
            <QuickButton type="button" aria-label="Save" $gap={15}><Floppy /></QuickButton>
            <QuickButton type="button" aria-label="Undo" $gap={8}><Undo /></QuickButton>
            <QuickButton type="button" aria-label="Undo list" $gap={12}><Caret /></QuickButton>
            <QuickButton type="button" aria-label="Repeat" $gap={19}><Redo /></QuickButton>
            <QuickButton type="button" aria-label="Customize toolbar" $gap={0}><Customize /></QuickButton>
          </QuickAccess>
          <DocTitle>Appendix 1. US Adult acute survey_1_19_2023_sah</DocTitle>
        </TitleLeft>
        <SearchBox>
          <Lens size={19} color="#1f3864" />
          <SearchInput placeholder="Search" aria-label="Search" />
        </SearchBox>
        <TitleRight>
          Hoffmann, Sandra - REE-ERS
          <Avatar>HS</Avatar>
          <WindowButton type="button" aria-label="Ribbon display"><WindowIcon kind="ribbon" /></WindowButton>
          <WindowButton type="button" aria-label="Minimize"><WindowIcon kind="min" /></WindowButton>
          <WindowButton type="button" aria-label="Restore"><WindowIcon kind="restore" /></WindowButton>
          <WindowButton type="button" aria-label="Close"><WindowIcon kind="close" /></WindowButton>
        </TitleRight>
      </TitleBar>

      <Ribbon>
        <TabRow>
          {tabs.map((t) => (
            <Tab key={t} type="button" $active={t === "Review"} $first={t === "File"}>{t}</Tab>
          ))}
          <TabActions>
            <ActionButton type="button"><ShareIcon />Share</ActionButton>
            <ActionButton type="button"><CommentIcon />Comments</ActionButton>
          </TabActions>
        </TabRow>
        <Groups>
          <RibbonGroup name="Proofing" width={216} pad={8}>
            <RibbonButton icon="spelling" lines={["Spelling &", "Grammar"]} width={76} />
            <RibbonButton icon="thesaurus" lines={["Thesaurus"]} width={70} />
            <RibbonButton icon="wordCount" lines={["Word", "Count"]} width={54} />
          </RibbonGroup>
          <RibbonGroup name="Speech" width={71}>
            <RibbonButton icon="readAloud" lines={["Read", "Aloud"]} width={71} />
          </RibbonGroup>
          <RibbonGroup name="Accessibility" width={105}>
            <RibbonButton icon="accessibility" lines={["Check", "Accessibility"]} width={105} />
          </RibbonGroup>
          <RibbonGroup name="Language" width={153} pad={6}>
            <RibbonButton icon="translate" lines={["Translate"]} width={70} caret="below" />
            <RibbonButton icon="language" lines={["Language"]} width={66} caret="below" />
          </RibbonGroup>
          <RibbonGroup name="Comments" width={329} pad={5}>
            <RibbonButton icon="newComment" lines={["New", "Comment"]} width={80} />
            <RibbonButton icon="deleteComment" lines={["Delete"]} width={44} caret="below" />
            <RibbonButton icon="previousComment" lines={["Previous"]} width={64} />
            <RibbonButton icon="nextComment" lines={["Next"]} width={50} />
            <RibbonButton icon="showComments" lines={["Show", "Comments"]} width={78} disabled />
          </RibbonGroup>
          <RibbonGroup name="Tracking" width={274} pad={4} launcher>
            <RibbonButton icon="track" lines={["Track", "Changes"]} width={84} caret="inline" />
            <SmallColumn $pad={1}>
              <ComboRow>
                <SmallIcon kind="display" />
                <Combo>
                  <ComboSelect aria-label="Display for review" defaultValue="none">
                    <option value="none">No Markup</option>
                  </ComboSelect>
                  <ComboArrow><Caret /></ComboArrow>
                </Combo>
              </ComboRow>
              <SmallButton type="button"><SmallIcon kind="show" />Show Markup<Caret /></SmallButton>
              <SmallButton type="button"><SmallIcon kind="pane" />Reviewing Pane&nbsp;&nbsp;&nbsp;<Caret /></SmallButton>
            </SmallColumn>
          </RibbonGroup>
          <RibbonGroup name="Changes" width={215} pad={10}>
            <RibbonButton icon="accept" lines={["Accept"]} width={52} caret="below" />
            <RibbonButton icon="reject" lines={["Reject"]} width={50} caret="below" />
            <SmallColumn $pad={7}>
              <SmallButton type="button"><SmallIcon kind="prev" />Previous</SmallButton>
              <SmallButton type="button"><SmallIcon kind="next" />Next</SmallButton>
            </SmallColumn>
          </RibbonGroup>
          <RibbonGroup name="Compare" width={85}>
            <RibbonButton icon="compare" lines={["Compare"]} width={85} caret="below" />
          </RibbonGroup>
          <RibbonGroup name="Protect" width={143} pad={12}>
            <RibbonButton icon="block" lines={["Block", "Authors"]} width={66} caret="inline" disabled />
            <RibbonButton icon="restrict" lines={["Restrict", "Editing"]} width={56} />
          </RibbonGroup>
          <RibbonGroup name="Ink" width={71}>
            <RibbonButton icon="ink" lines={["Hide", "Ink"]} width={71} caret="inline" />
          </RibbonGroup>
          <RibbonGroup name="OneNote" width={71}>
            <RibbonButton icon="oneNote" lines={["Linked", "Notes"]} width={71} />
          </RibbonGroup>
          <CollapseButton type="button" aria-label="Collapse ribbon">
            <svg width="13" height="8" viewBox="0 0 13 8" fill="none" stroke={ink} strokeWidth="1.500">
              <path d="M1 7l5.500-5.500L12 7" />
            </svg>
          </CollapseButton>
        </Groups>
      </Ribbon>

      <Workspace>
        <LeftRail>
          <TabStop type="button" aria-label="Tab stop">
            <svg width="8" height="8" viewBox="0 0 8 8" fill="none" stroke="#666" strokeWidth="3">
              <path d="M1.500 0v6.500H8" />
            </svg>
          </TabStop>
          <VerticalRuler>
            <VerticalTicks>{marks(1, 74, true)}</VerticalTicks>
          </VerticalRuler>
        </LeftRail>
        <Canvas>
          <HorizontalRuler>
            <RulerZone $column={1} $outside />
            <RulerZone $column={2} />
            <RulerZone $column={3} $outside />
            <RulerTicks>{marks(-8, 59)}</RulerTicks>
            <IndentMarker $column={2}>
              <svg width="11" height="28" viewBox="5 3 11 28" fill="#fff" stroke="#8a8a8a">
                <path d="M0 0h10v4L5 9.500 0 4zM5 9.500l5 5.500v5H0v-5zM0 20h10v6H0z" />
              </svg>
            </IndentMarker>
            <IndentMarker $column={3}>
              <svg width="11" height="20" viewBox="5 0 11 20" fill="#fff" stroke="#8a8a8a">
                <path d="M5 9l5 5v5H0v-5z" />
              </svg>
            </IndentMarker>
          </HorizontalRuler>
          <Page>
            <Heading>14.  Choice 2.</Heading>
            <Body>
              <Para>Now imagine that you face a choice between two new options:</Para>
              <Para>
                <b>Option A.</b>&nbsp; You get a foodborne illness and experience the symptoms shown below. After the illness you will
                <br />
                return to your current state of health.
              </Para>
              <Para>
                <b>Option B.</b> You get a foodborne illness but avoid all symptoms.&nbsp; But there is a cost to avoiding the symptoms as
                <br />
                shown below.
              </Para>
              <Para>If these were the only two options available to you, which would you choose?</Para>
              <Budget>
                <Para>Remember your budget!</Para>
                <Para>
                  If you spend money to avoid the symptoms of foodborne illness, you won’t have
                  <br />
                  it for other things you may want or need.
                </Para>
              </Budget>
            </Body>
            <ChoiceTable>
              <colgroup>
                <Column $width={140} />
                <Column $width={13} />
                <Column $width={226} />
                <Column $width={14} />
                <Column $width={193} />
              </colgroup>
              <tbody>
                <Row $height={265}>
                  <RowHead scope="row" $middle>What you would<br />experience</RowHead>
                  <Cell />
                  <Cell $box $top>
                    <OptionTitle>
                      <HangingLine>Option A. Get a foodborne illness and</HangingLine>
                      <HangingLine $indent={42}>experience symptoms</HangingLine>
                    </OptionTitle>
                    <Symptoms $indent={26}>
                      {symptomsA.map((s) => <Symptom key={s}>{s}</Symptom>)}
                    </Symptoms>
                  </Cell>
                  <Cell $top />
                  <Cell $box $top>
                    <OptionTitle>
                      <HangingLine>Option B. Get a foodborne illness,</HangingLine>
                      <HangingLine>but don’t experience symptoms</HangingLine>
                    </OptionTitle>
                    <Symptoms $indent={14}>
                      {symptomsB.map((s, i) => <Symptom key={s} $tall={i === 0}>{s}</Symptom>)}
                    </Symptoms>
                  </Cell>
                </Row>
                <Row $height={26}>
                  <RowHead scope="row" $dash>Length of symptoms</RowHead>
                  <Cell />
                  <Cell $box $dash>3 days</Cell>
                  <Cell />
                  <Cell $box $dash>0 days</Cell>
                </Row>
                <Row>
                  <RowHead scope="row" $dash>Extra expenditure</RowHead>
                  <Cell />
                  <Cell $box $dash $bottom>$0</Cell>
                  <Cell />
                  <Cell $box $dash $bottom>$25</Cell>
                </Row>
                <Row>
                  <RowHead scope="row" $pad={15}>Which one would you<br />choose?</RowHead>
                  <Cell />
                  <Cell><PickBox type="checkbox" aria-label="Choose option A" /></Cell>
                  <Cell />
                  <Cell><PickBox type="checkbox" aria-label="Choose option B" /></Cell>
                </Row>
                <Row>
                  <Cell colSpan={2} />
                  <Cell colSpan={2}><FollowUpText price="$10?" /></Cell>
                  <Cell><FollowUpText price="$35?" /></Cell>
                </Row>
              </tbody>
            </ChoiceTable>
          </Page>
          <Page>
            <Possible>It’s possible that these preventive expenditures could be more (less) expensive.</Possible>
            <FollowPair>
              <FollowUpText price="$10?" />
              <FollowUpText price="$40?" />
            </FollowPair>
          </Page>
        </Canvas>
        <Scrollbar>
          <ScrollButton type="button" aria-label="Scroll up">
            <svg width="10" height="6" viewBox="0 0 10 6" fill="#777"><path d="M0 6l5-6 5 6z" /></svg>
          </ScrollButton>
          <ScrollGap $share={472} />
          <ScrollThumb />
          <ScrollGap $share={240} />
          <ScrollButton type="button" aria-label="Scroll down">
            <svg width="10" height="6" viewBox="0 0 10 6" fill="#777"><path d="M0 0l5 6 5-6z" /></svg>
          </ScrollButton>
        </Scrollbar>
      </Workspace>

      <StatusBar>
        <StatusLeft>
          <PageCount>Page 18 of 26</PageCount>
          <span>2854 words</span>
          <StatusIcon kind="proof" />
          <StatusIcon kind="macro" />
        </StatusLeft>
        <StatusRight>
          <FocusButton type="button"><StatusIcon kind="focus" />Focus</FocusButton>
          <ViewButton type="button" aria-label="Read mode"><StatusIcon kind="read" /></ViewButton>
          <ViewButton type="button" aria-label="Print layout" $active><StatusIcon kind="print" /></ViewButton>
          <ViewButton type="button" aria-label="Web layout"><StatusIcon kind="web" /></ViewButton>
          <button type="button" aria-label="Zoom out">
            <svg width="17" height="11" viewBox="0 0 17 11" stroke={ink}><path d="M6 5.500h10" /></svg>
          </button>
          <ZoomSlider type="range" min={0} max={100} defaultValue={34} aria-label="Zoom" />
          <button type="button" aria-label="Zoom in">
            <svg width="11" height="11" viewBox="0 0 11 11" stroke={ink}><path d="M0 5.500h11M5.500 0v11" /></svg>
          </button>
          <ZoomValue>69%</ZoomValue>
        </StatusRight>
      </StatusBar>

      <Taskbar>
        <StartButton type="button" aria-label="Start">
          <svg width="20" height="20" viewBox="0 0 20 20" fill="#fff">
            <path d="M0 3l8.500-1.500v8H0zM9.500 1.300 20 0v9.500H9.500zM0 10.500h8.500v8L0 17.300zM9.500 10.500H20V20L9.500 18.700z" />
          </svg>
        </StartButton>
        <TaskSearch>
          <Lens size={20} color="#1a1a1a" />
          <TaskSearchInput placeholder="Type here to search" aria-label="Type here to search" />
        </TaskSearch>
        <TaskButton type="button" aria-label="Task view">
          <svg width="21" height="19" viewBox="0 0 21 19" fill="none" stroke="#fff" strokeWidth="1.300">
            <path d="M1 0v3h13V0M1 19v-3h13v3M1 5.500h13v8H1zM19 0v4M19 10v9M17.500 7h3" />
          </svg>
        </TaskButton>
        <TaskButton type="button" aria-label="Chrome"><Chrome /></TaskButton>
        <TaskButton type="button" aria-label="File Explorer" $state="open"><Explorer /></TaskButton>
        <TaskButton type="button" aria-label="Edge"><Edge /></TaskButton>
        <TaskButton type="button" aria-label="Notepad++"><NotepadPlus /></TaskButton>
        <TaskButton type="button" aria-label="Word" $state="active"><WordLogo /></TaskButton>
        <TaskButton type="button" aria-label="Teams" $state="stack"><TeamsLogo /></TaskButton>
        <TaskButton type="button" aria-label="Outlook" $state="stack"><OutlookLogo /></TaskButton>
        <Tray>
          <Weather type="button">
            <WeatherIcon />
            <span>46°F</span>
            <span>Mostly cloudy</span>
          </Weather>
          <TrayButton type="button" aria-label="Hidden icons" $gap={11}>
            <svg width="17" height="10" viewBox="0 0 17 10" fill="none" stroke="#fff" strokeWidth="1.400"><path d="M1 9l7.500-8L16 9" /></svg>
          </TrayButton>
          <TrayButton type="button" aria-label="Volume" $gap={13}>
            <svg width="21" height="18" viewBox="0 0 21 18" fill="none" stroke="#fff" strokeWidth="1.200">
              <path d="M1 6h3l4-4v14l-4-4H1zM11 6q2 3 0 6M14 4q4 5 0 10M17 2q5 7 0 14" />
            </svg>
          </TrayButton>
          <Clock>3:52 PM<br />1/20/2023</Clock>
          <TrayButton type="button" aria-label="Notifications" $gap={26}>
            <svg width="20" height="20" viewBox="0 0 20 20">
              <path fill="#fff" d="M0 0h20v16h-7l-3 4-3-4H0z" />
              <path stroke="#1b2a44" strokeWidth="1.300" d="M4 4.500h12M4 8.500h12M4 12.500h8" />
            </svg>
          </TrayButton>
          <ShowDesktop type="button" aria-label="Show desktop" />
        </Tray>
      </Taskbar>
    </Shell>
  );
}
